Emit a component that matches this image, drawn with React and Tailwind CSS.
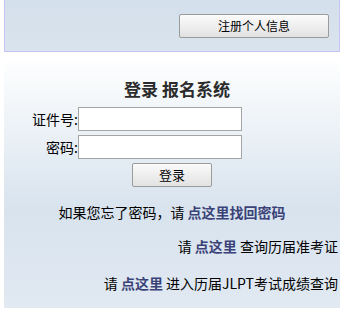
import React, { useState } from "react";

const font = "font-['Noto_Sans_CJK_SC','Noto_Sans',sans-serif]";

const App = () => {
	const [data, setData] = useState({ id: "", password: "" });

	const changeHandler = (e) => {
		const { name, value } = e.target;
		setData({ ...data, [name]: value });
	};

	return (
		<div className={`w-[347px] h-[313px] bg-white px-[4px] ${font} text-[14px] text-black`}>
			{/* top bar */}
			<div className="h-[52px] w-[336px] border-x border-b border-[#c5c7f1] bg-gradient-to-b from-[#d3dfeb] to-[#dae4ee] flex justify-end pr-[10px]">
				<button className="mt-[14px] h-[24px] w-[150px] border border-[#9b9b9b] rounded-[2px] bg-gradient-to-b from-[#fbfbfb] to-[#e2e2e2] text-[12px] leading-[22px] text-black">
					注册个人信息
				</button>
			</div>

			{/* login panel */}
			<div className="mt-[10px] w-[336px] h-[246px] bg-gradient-to-b from-[#fdfefe] via-[#d8e3ee] via-60% to-[#e1e9f2] pt-[16px] flex flex-col">
				<div className="h-[22px] leading-[22px] text-center text-[17px] font-bold text-[#2b2b2b] pl-[10px]">
					登录 报名系统
				</div>
				<form
					onSubmit={(e) => e.preventDefault()}
					className="mt-[7px] flex flex-col gap-[4px]"
				>
					<div className="flex items-center">
						<label htmlFor="id" className="w-[74px] text-right leading-[24px]">
							证件号:
						</label>
						<input
							id="id"
							name="id"
							autoComplete="off"
							onChange={changeHandler}
							className="w-[164px] h-[24px] border border-[#a5a5a5] bg-white outline-none px-1"
						/>
					</div>
					<div className="flex items-center">
						<label htmlFor="password" className="w-[74px] text-right leading-[24px]">
							密码:
						</label>
						<input
							id="password"
							name="password"
							type="password"
							autoComplete="off"
							onChange={changeHandler}
							className="w-[164px] h-[24px] border border-[#a5a5a5] bg-white outline-none px-1"
						/>
					</div>
					<div className="flex justify-center">
						<button className="h-[24px] w-[80px] border border-[#9b9b9b] rounded-[2px] bg-gradient-to-b from-[#fbfbfb] to-[#e2e2e2] text-[13px] leading-[22px]">
							登录
						</button>
					</div>
				</form>

				<p className="mt-[15px] h-[20px] leading-[20px] text-center">
					如果您忘了密码，请{" "}
					<a className="font-bold text-[#3a4278] cursor-pointer">点这里找回密码</a>
				</p>
				<p className="mt-[14px] h-[20px] leading-[20px] text-right pr-[2px]">
					请 <a className="font-bold text-[#3a4278] cursor-pointer">点这里</a> 查询历届准考证
				</p>
				<p className="mt-[17px] h-[20px] leading-[20px] text-right pr-[2px]">
					请 <a className="font-bold text-[#3a4278] cursor-pointer">点这里</a> 进入历届JLPT考试成绩查询
				</p>
			</div>
		</div>
	);
};

export default App;
